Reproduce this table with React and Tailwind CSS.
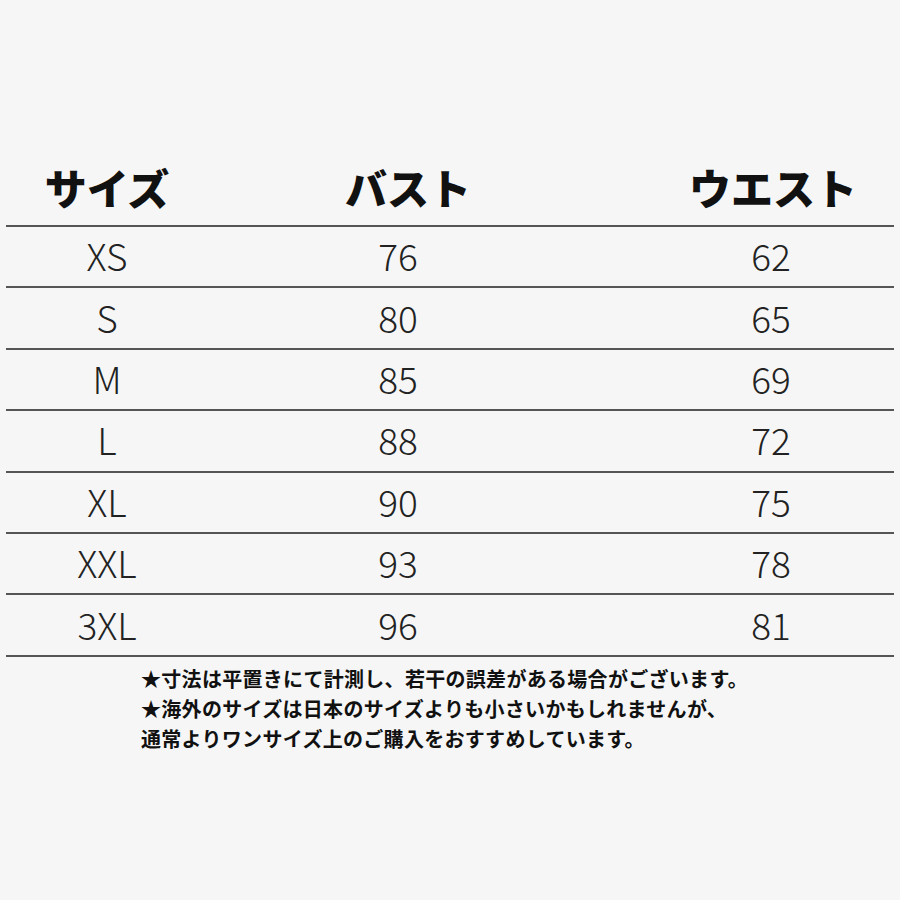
import React from "react";

const rows = [
  ["XS", "76", "62"],
  ["S", "80", "65"],
  ["M", "85", "69"],
  ["L", "88", "72"],
  ["XL", "90", "75"],
  ["XXL", "93", "78"],
  ["3XL", "96", "81"],
];

const jp = { fontFamily: '"Noto Sans CJK JP", "Noto Sans", sans-serif' };

export default function App() {
  return (
    <div className="w-[900px] h-[900px] bg-[#f6f6f6] text-[#111]" style={jp}>
      <div className="pt-[160px] pl-[6px] w-[894px]">
        {/* ヘッダー */}
        <div className="flex items-center h-[67px] border-b-2 border-[#555] text-[42px] font-black leading-none">
          <div className="w-[202px] text-center pb-[12px]">サイズ</div>
          <div className="w-[440px] pr-[40px] text-center pb-[12px]">バスト</div>
          <div className="flex-1 text-center pb-[12px] pl-[4px]">ウエスト</div>
        </div>

        {rows.map((r, i) => (
          <div
            key={i}
            className="flex items-center h-[61.4px] border-b-2 border-[#555] text-[37px] font-light text-[#222] leading-none"
          >
            <div className="w-[202px] text-center pb-[2px]">{r[0]}</div>
            <div className="w-[440px] pr-[60px] text-center pb-[2px]">{r[1]}</div>
            <div className="flex-1 text-center pb-[2px]">{r[2]}</div>
          </div>
        ))}
      </div>

      <div className="pl-[141px] pt-[7px] text-[20px] font-bold leading-[30px] text-[#111] tracking-[0.3px]">
        <p>★寸法は平置きにて計測し、若干の誤差がある場合がございます。</p>
        <p>★海外のサイズは日本のサイズよりも小さいかもしれませんが、</p>
        <p>通常よりワンサイズ上のご購入をおすすめしています。</p>
      </div>
    </div>
  );
}
